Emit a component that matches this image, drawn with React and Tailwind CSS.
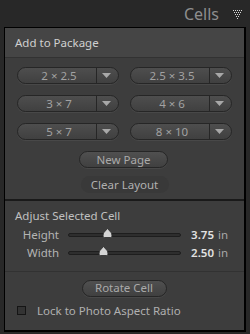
import React from "react";

const font = { fontFamily: '"Noto Sans", "Open Sans", sans-serif' };

function Dropdown({ label }) {
  return (
    <div className="flex h-[17px] w-[102px] items-stretch rounded-full border border-[#262626] bg-gradient-to-b from-[#4e4e4e] to-[#404040] shadow-[0_1px_0_rgba(255,255,255,0.06)]">
      <div className="flex flex-1 items-center justify-center pl-[4px] text-[11.5px] leading-none text-[#a2a2a2]">
        {label}
      </div>
      <div className="w-px bg-[#262626]" />
      <div className="flex w-[21px] items-center justify-center pr-[2px]">
        <svg width="9" height="5" viewBox="0 0 9 5">
          <path d="M0 0 H9 L4.5 5 Z" fill="#a8a8a8" />
        </svg>
      </div>
    </div>
  );
}

function Button({ children, w = "w-[89px]", flat = false }) {
  return (
    <div
      className={
        "flex h-[17px] items-center justify-center rounded-full text-[11.5px] leading-none " +
        w +
        (flat
          ? " bg-[#393939] text-[#b0b0b0]"
          : " border border-[#262626] bg-gradient-to-b from-[#505050] to-[#404040] text-[#aaaaaa] shadow-[0_1px_0_rgba(255,255,255,0.06)]")
      }
    >
      {children}
    </div>
  );
}

function Slider({ label, pos, value }) {
  return (
    <div className="flex h-[18px] items-center">
      <div className="w-[54px] text-right text-[11.5px] leading-none text-[#b4b4b4]">{label}</div>
      <div className="relative ml-[9px] h-[4px] w-[113px] rounded-full border border-[#1e1e1e] bg-[#2e2e2e]">
        <svg
          className="absolute top-[-6px]"
          style={{ left: pos - 63 - 6 }}
          width="11"
          height="10"
          viewBox="0 0 11 10"
        >
          <path d="M5.5 0.5 L9.5 5 L10 8 Q10 9.5 8.5 9.5 H2.5 Q1 9.5 1 8 L1.5 5 Z" fill="#d4d4d4" stroke="#2a2a2a" strokeWidth="0.8" />
        </svg>
      </div>
      <div className="w-[33px] text-right text-[11.5px] font-semibold leading-none text-[#e2e2e2]">{value}</div>
      <div className="ml-[4px] text-[11.5px] leading-none text-[#a8a8a8]">in</div>
    </div>
  );
}

export default function App() {
  return (
    <div className="h-[334px] w-[250px] bg-[#282828]" style={font}>
      <div className="flex h-[27px] items-center justify-end pr-[8px]">
        <span className="mr-[14px] text-[16px] leading-none text-[#8e8e8e]">Cells</span>
        <svg width="9" height="9" viewBox="0 0 9 9" className="mt-[2px]">
          {[0, 2, 4, 6, 8].map((x) => <rect key={"a" + x} x={x} y={0} width="1" height="1" fill="#d8d8d8" />)}
          {[1, 3, 5, 7].map((x) => <rect key={"b" + x} x={x} y={2} width="1" height="1" fill="#d8d8d8" />)}
          {[2, 4, 6].map((x) => <rect key={"c" + x} x={x} y={4} width="1" height="1" fill="#d8d8d8" />)}
          {[3, 5].map((x) => <rect key={"d" + x} x={x} y={6} width="1" height="1" fill="#d8d8d8" />)}
          <rect x={4} y={8} width="1" height="1" fill="#d8d8d8" />
        </svg>
      </div>
      <div className="ml-[4px] flex h-[305px] w-[242px] flex-col border-t border-l border-r-2 border-b-2 border-black bg-[#3d3d3d]">
        <div className="flex h-[30px] items-center border-b border-[#323232] bg-[#454545] pl-[10px] text-[11.5px] leading-none text-[#d0d0d0]">
          Add to Package
        </div>
        <div className="flex flex-col items-center pt-[9px]">
          <div className="grid grid-cols-2 gap-x-[11px] gap-y-[11px]">
            <Dropdown label="2 × 2.5" />
            <Dropdown label="2.5 × 3.5" />
            <Dropdown label="3 × 7" />
            <Dropdown label="4 × 6" />
            <Dropdown label="5 × 7" />
            <Dropdown label="8 × 10" />
          </div>
          <div className="mt-[11px] ml-[-2px]">
            <Button>New Page</Button>
          </div>
          <div className="mt-[8px]">
            <Button flat w="w-[88px]">Clear Layout</Button>
          </div>
        </div>
        <div className="mt-[6px] h-[2px] bg-[#1a1a1a]" />
        <div className="flex flex-col border-b border-[#323232] pb-[9px]">
          <div className="pl-[10px] pt-[9px] text-[11.5px] leading-none text-[#c0c0c0]">Adjust Selected Cell</div>
          <div className="mt-[4px] flex flex-col">
            <Slider label="Height" pos={102} value="3.75" />
            <Slider label="Width" pos={98} value="2.50" />
          </div>
        </div>
        <div className="flex flex-col">
          <div className="mt-[8px] flex justify-center pr-[1px]">
            <Button w="w-[85px]">Rotate Cell</Button>
          </div>
          <div className="mt-[8px] flex items-center pl-[12px]">
            <div className="h-[9px] w-[9px] border border-[#151515] bg-[#333]" />
            <span className="ml-[11px] text-[11.5px] leading-none text-[#b0b0b0]">Lock to Photo Aspect Ratio</span>
          </div>
        </div>
      </div>
    </div>
  );
}
